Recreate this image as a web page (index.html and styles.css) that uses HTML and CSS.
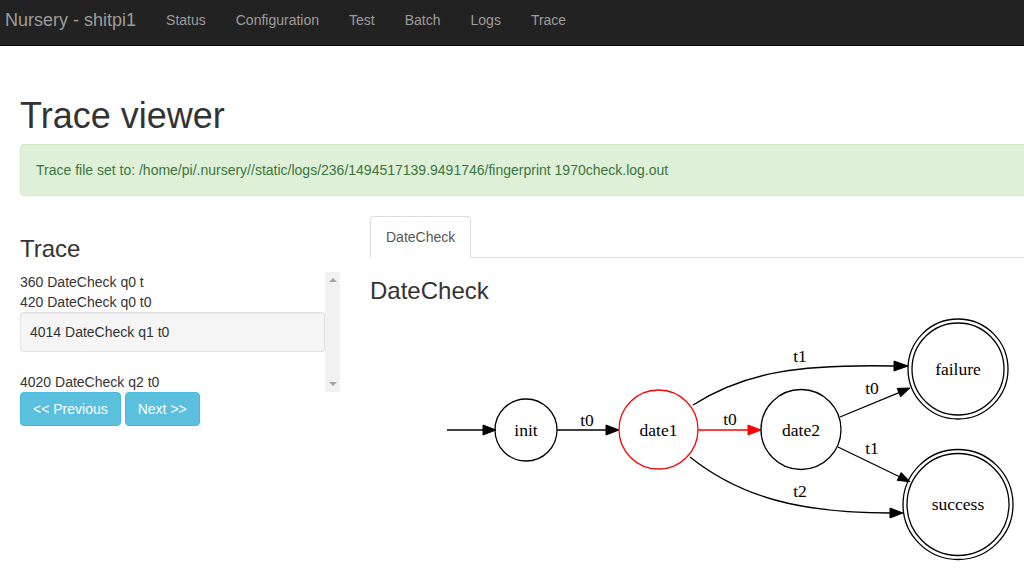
FILE: index.html
```html
<!DOCTYPE html>
<html lang="en">
<head>
<meta charset="utf-8">
<title>Nursery - Trace viewer</title>
<link rel="stylesheet" href="styles.css">
</head>
<body>
<nav class="navbar">
  <a class="brand" href="#">Nursery - shitpi1</a>
  <ul class="nav">
    <li><a href="#">Status</a></li>
    <li><a href="#">Configuration</a></li>
    <li><a href="#">Test</a></li>
    <li><a href="#">Batch</a></li>
    <li><a href="#">Logs</a></li>
    <li><a href="#">Trace</a></li>
  </ul>
</nav>
<div class="page">
  <h1 class="title">Trace viewer</h1>
  <div class="alert">Trace file set to: /home/pi/.nursery//static/logs/236/1494517139.9491746/fingerprint 1970check.log.out</div>
  <div class="row">
    <div class="left">
      <h3 class="subtitle">Trace</h3>
      <div class="trace-box">
        <div class="trace-list">
          <div class="item">360 DateCheck q0 t</div>
          <div class="item">420 DateCheck q0 t0</div>
          <div class="well">4014 DateCheck q1 t0</div>
          <div class="item">4020 DateCheck q2 t0</div>
        </div>
        <div class="scrollbar">
          <span class="arrow up"></span>
          <span class="arrow down"></span>
        </div>
      </div>
      <div class="btns">
        <a class="btn" href="#">&lt;&lt; Previous</a>
        <a class="btn" href="#">Next &gt;&gt;</a>
      </div>
    </div>
    <div class="right">
      <ul class="tabs">
        <li class="active"><a href="#">DateCheck</a></li>
      </ul>
      <h3 class="subtitle">DateCheck</h3>
      <svg class="graph" width="670" height="273" viewBox="0 0 670 273" xmlns="http://www.w3.org/2000/svg">
        <g transform="translate(-370,-314)" font-family="'Liberation Serif', 'Times New Roman', serif" font-size="17.5" text-anchor="middle">
          <!-- start arrow -->
          <line x1="447" y1="430" x2="484" y2="430" stroke="#000" stroke-width="1.3"/>
          <polygon points="483,425 496,430 483,435" fill="#000" stroke="#000" stroke-width="1"/>
          <!-- init node -->
          <circle cx="526" cy="430" r="31" fill="none" stroke="#000" stroke-width="1.3"/>
          <text x="526" y="436">init</text>
          <!-- init -> date1 -->
          <line x1="557" y1="430" x2="606" y2="430" stroke="#000" stroke-width="1.3"/>
          <polygon points="606,425 619,430 606,435" fill="#000" stroke="#000" stroke-width="1"/>
          <text x="587" y="426">t0</text>
          <!-- date1 node -->
          <circle cx="658.5" cy="429.5" r="39.5" fill="none" stroke="#ff0000" stroke-width="1.3"/>
          <text x="658.5" y="436">date1</text>
          <!-- date1 -> date2 (red) -->
          <line x1="698" y1="430" x2="748" y2="430" stroke="#ff0000" stroke-width="1.3"/>
          <polygon points="748,425 761,430 748,435" fill="#ff0000" stroke="#ff0000" stroke-width="1"/>
          <text x="730" y="425">t0</text>
          <!-- date1 -> failure -->
          <path d="M693,405 C745,372 800,364 894,366" fill="none" stroke="#000" stroke-width="1.3"/>
          <polygon points="894,361 908,366 894,371" fill="#000" stroke="#000" stroke-width="1"/>
          <text x="800" y="362">t1</text>
          <!-- date1 -> success -->
          <path d="M690,457 C740,497 800,513 890,513" fill="none" stroke="#000" stroke-width="1.3"/>
          <polygon points="890,508 903,513 890,518" fill="#000" stroke="#000" stroke-width="1"/>
          <text x="800" y="497">t2</text>
          <!-- date2 node -->
          <circle cx="801" cy="429.5" r="40" fill="none" stroke="#000" stroke-width="1.3"/>
          <text x="801" y="436">date2</text>
          <!-- date2 -> failure -->
          <line x1="840" y1="417" x2="899" y2="392.6" stroke="#000" stroke-width="1.3"/>
          <polygon points="897.2,388.4 910,388 900.6,396.8" fill="#000" stroke="#000" stroke-width="1"/>
          <text x="872" y="394">t0</text>
          <!-- date2 -> success -->
          <line x1="838" y1="447" x2="899" y2="476.5" stroke="#000" stroke-width="1.3"/>
          <polygon points="901.2,472.6 910,481.7 897.2,480.4" fill="#000" stroke="#000" stroke-width="1"/>
          <text x="872" y="454">t1</text>
          <!-- failure node -->
          <circle cx="958" cy="369" r="50" fill="none" stroke="#000" stroke-width="1.3"/>
          <circle cx="958" cy="369" r="46" fill="none" stroke="#000" stroke-width="1.3"/>
          <text x="958" y="375">failure</text>
          <!-- success node -->
          <circle cx="958" cy="504.5" r="55" fill="none" stroke="#000" stroke-width="1.3"/>
          <circle cx="958" cy="504.5" r="51" fill="none" stroke="#000" stroke-width="1.3"/>
          <text x="958" y="510">success</text>
        </g>
      </svg>
    </div>
  </div>
</div>
</body>
</html>
```

FILE: styles.css
```css
html {
  overflow: hidden;
}

body {
  margin: 0;
  font-family: "Liberation Sans", Arial, Helvetica, sans-serif;
  font-size: 14px;
  line-height: 20px;
  color: #333;
  background: #fff;
}

a {
  text-decoration: none;
}

.navbar {
  display: flex;
  align-items: flex-start;
  height: 45px;
  background: #222;
  border-bottom: 1px solid #080808;
}

.brand {
  padding: 10px 15px 0 5px;
  font-size: 18px;
  line-height: 20px;
  color: #9d9d9d;
}

.nav {
  display: flex;
  margin: 0;
  padding: 0;
  list-style: none;
}

.nav a {
  display: block;
  padding: 10px 15px 0;
  line-height: 20px;
  color: #9d9d9d;
}

.page {
  width: 1020px;
  padding: 0 20px;
}

.title {
  margin: 50px 0 8px;
  font-size: 36px;
  font-weight: 500;
  line-height: 1.1;
}

.alert {
  padding: 15px;
  margin-bottom: 20px;
  border: 1px solid #d6e9c6;
  border-radius: 4px;
  background: #dff0d8;
  color: #3c763d;
}

.row {
  display: grid;
  grid-template-columns: 320px 670px;
  column-gap: 30px;
}

.subtitle {
  margin: 20px 0 10px;
  font-size: 24px;
  font-weight: 500;
  line-height: 1.1;
}

.trace-box {
  display: flex;
  height: 120px;
}

.trace-list {
  flex: 1;
  overflow: hidden;
}

.well {
  padding: 9px;
  margin-bottom: 20px;
  background: #f5f5f5;
  border: 1px solid #e3e3e3;
  border-radius: 3px;
  box-shadow: inset 0 1px 1px rgba(0, 0, 0, 0.05);
}

.scrollbar {
  width: 15px;
  background: #f1f1f1;
  display: flex;
  flex-direction: column;
  justify-content: space-between;
  align-items: center;
  padding: 6px 0;
  box-sizing: border-box;
}

.arrow {
  width: 0;
  height: 0;
  border-left: 4px solid transparent;
  border-right: 4px solid transparent;
}

.arrow.up {
  border-bottom: 4px solid #a3a3a3;
}

.arrow.down {
  border-top: 4px solid #a3a3a3;
}

.btns {
  display: flex;
  gap: 4px;
}

.btn {
  display: inline-block;
  padding: 6px 12px;
  border: 1px solid #46b8da;
  border-radius: 4px;
  background: #5bc0de;
  color: #fff;
  line-height: 20px;
}

.tabs {
  display: flex;
  margin: 0;
  padding: 0;
  list-style: none;
  border-bottom: 1px solid #ddd;
  margin-right: -20px;
}

.tabs li {
  margin-bottom: -1px;
}

.tabs a {
  display: block;
  margin-right: 2px;
  padding: 10px 15px;
  line-height: 20px;
  border: 1px solid transparent;
  border-radius: 4px 4px 0 0;
  color: #555;
}

.tabs .active a {
  border-color: #ddd;
  border-bottom-color: #fff;
  background: #fff;
}

.graph {
  display: block;
}
```
